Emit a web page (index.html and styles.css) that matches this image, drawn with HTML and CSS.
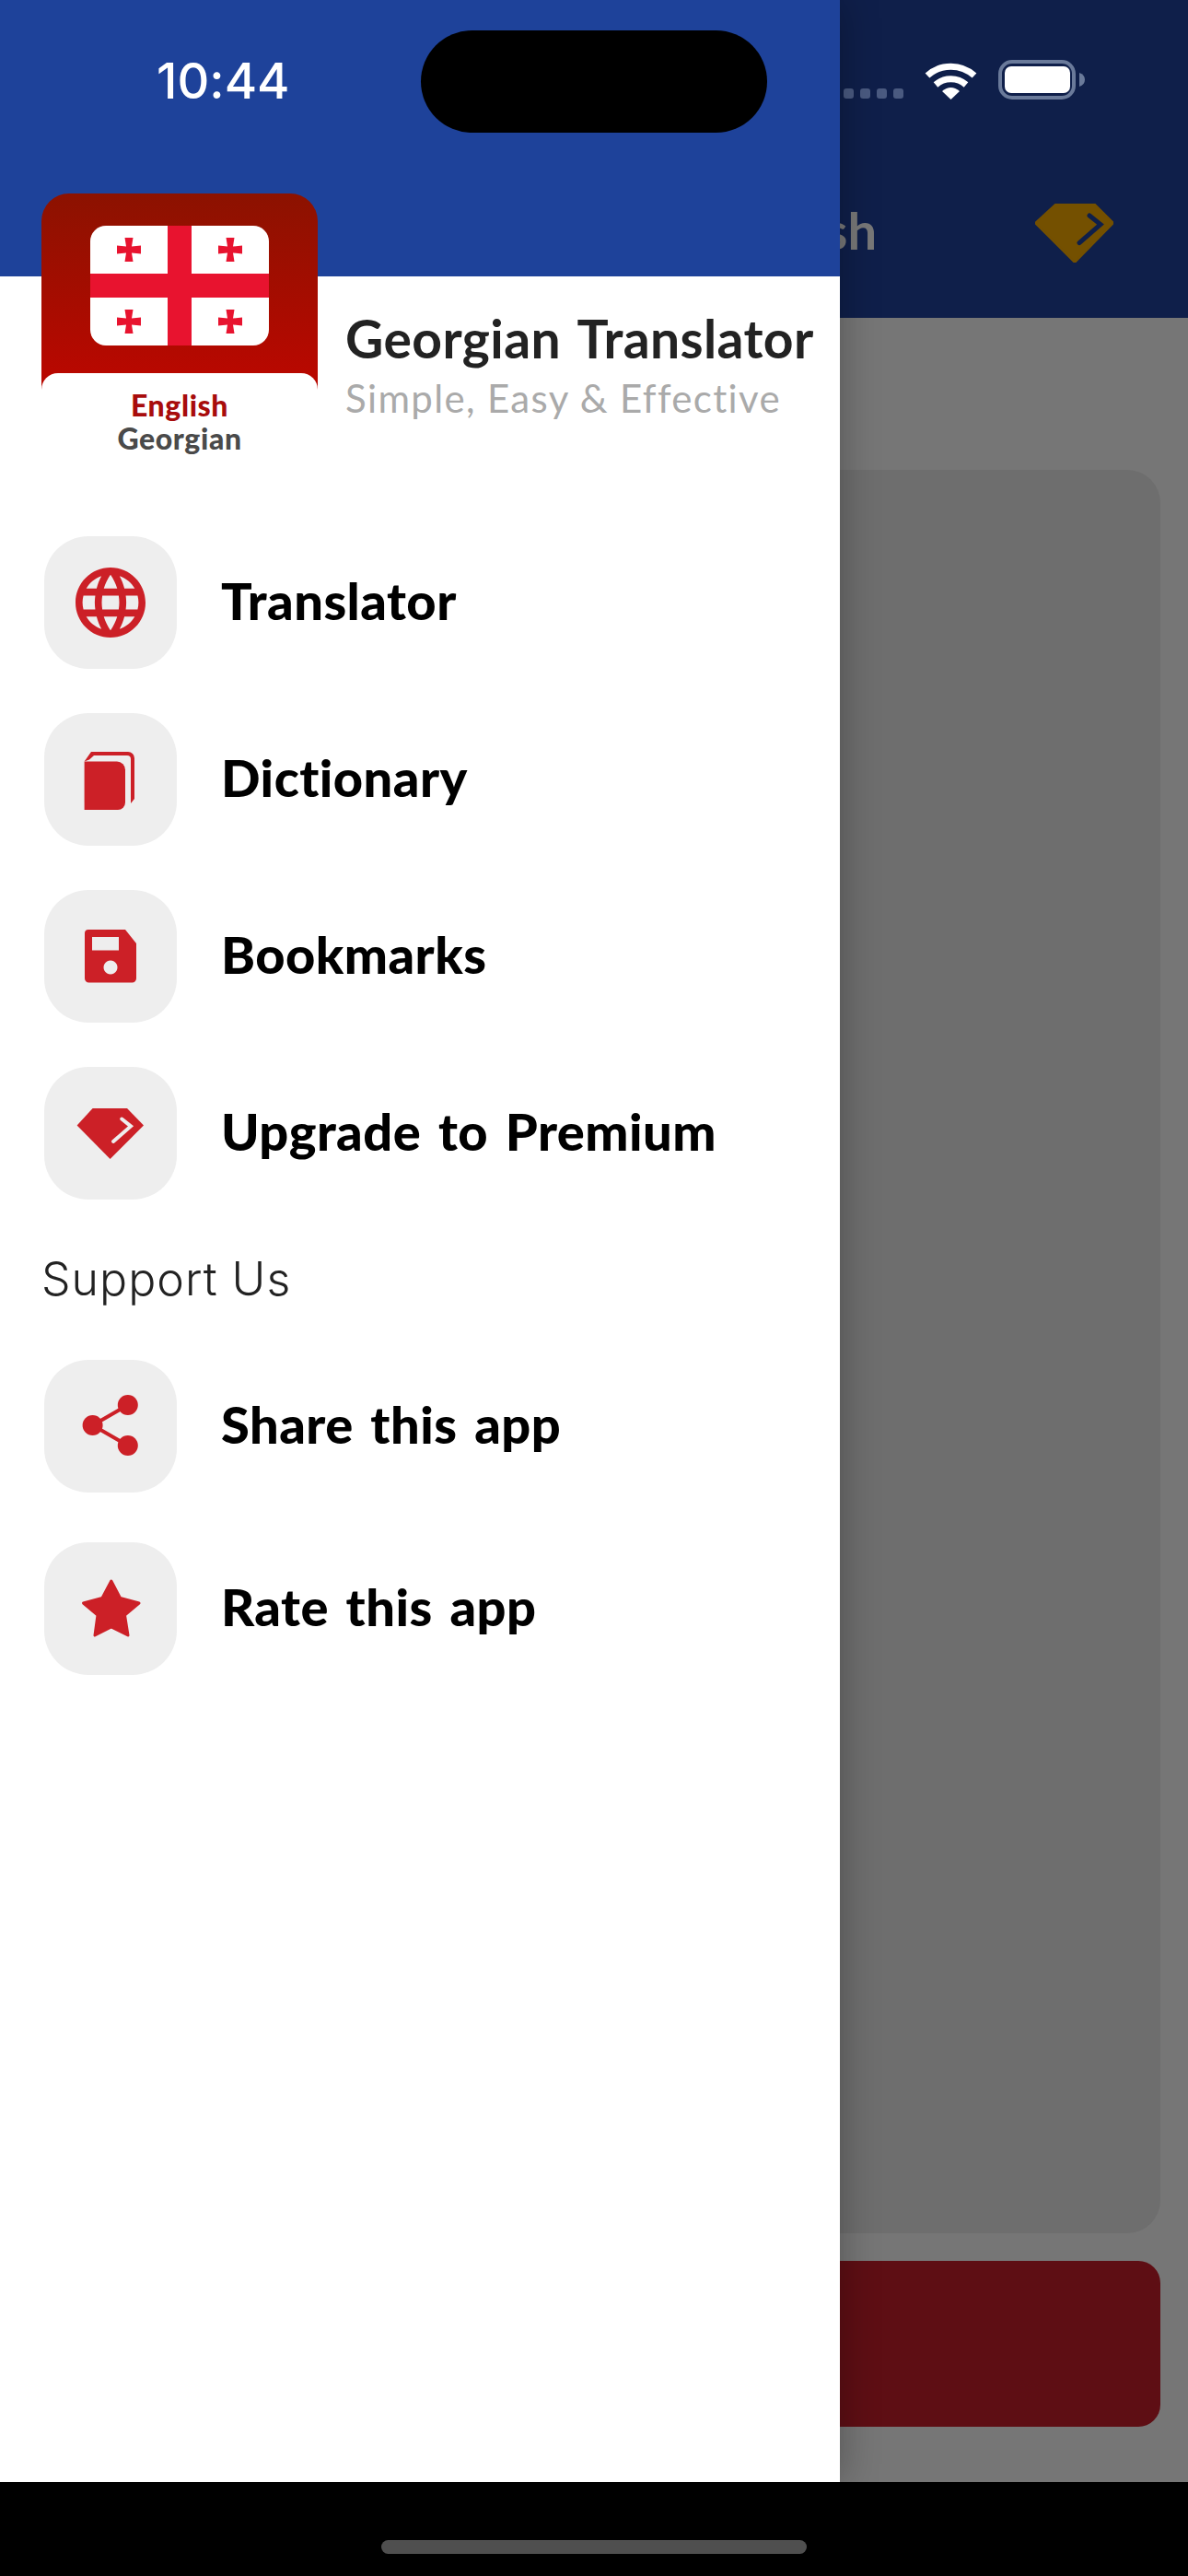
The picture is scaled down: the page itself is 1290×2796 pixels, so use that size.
FILE: index.html
```html
<!DOCTYPE html>
<html lang="en">
<head>
<meta charset="utf-8">
<title>Georgian Translator</title>
<link rel="stylesheet" href="styles.css">
</head>
<body>
<div class="phone">
  <div class="screen">
    <div class="back">
      <header class="back-header">
        <div class="back-status">
          <div class="dots"><i></i><i></i><i></i><i></i></div>
          <svg class="wifi" viewBox="0 0 57 42" width="57" height="42"><path class="wifi-arc" d="M3 16A38 38 0 0 1 54 16"/><path class="wifi-arc" d="M12 26A25 25 0 0 1 45 26"/><path class="wifi-fill" d="M19 33Q28.500 25 38 33L28.500 42Z"/></svg>
          <svg class="battery" viewBox="0 0 94 43" width="94" height="43"><rect class="batt-border" x="2" y="2" width="80" height="39" rx="13"/><rect class="batt-fill" x="7" y="7" width="71" height="29" rx="7"/><path class="batt-nub" d="M88 14Q94 16 94 21.500Q94 27 88 29Z"/></svg>
        </div>
        <div class="back-nav">
          <span class="back-title">English</span>
          <svg class="back-gem" viewBox="0 0 85 64" width="85" height="64"><path class="back-gem-fill" d="M23 0H64L85 21L43 64L0 21Z"/><path class="back-gem-mark" d="M59 13L71 22.600L48 42.600"/></svg>
        </div>
      </header>
      <main class="back-body">
        <div class="back-card"></div>
        <div class="back-button"></div>
      </main>
    </div>

    <aside class="drawer">
      <div class="drawer-top"><span class="time">10:44</span></div>
      <div class="brand">
        <div class="logo">
          <svg class="flag" viewBox="0 0 194 130" width="194" height="130">
            <defs>
              <path id="bolnur" d="M-4.500-13H4.500L3-3.500L13-4.500V4.500L3 3.500L4.500 13H-4.500L-3 3.500L-13 4.500V-4.500L-3-3.500Z"/>
            </defs>
            <rect class="flag-field" width="194" height="130" rx="17"/>
            <rect class="flag-red" x="84" width="26" height="130"/>
            <rect class="flag-red" y="52" width="194" height="26"/>
            <use class="flag-red" href="#bolnur" x="42" y="26"/>
            <use class="flag-red" href="#bolnur" x="152" y="26"/>
            <use class="flag-red" href="#bolnur" x="42" y="104"/>
            <use class="flag-red" href="#bolnur" x="152" y="104"/>
          </svg>
          <div class="logo-labels">
            <span class="logo-en">English</span>
            <span class="logo-ge">Georgian</span>
          </div>
        </div>
        <div class="brand-text">
          <h1 class="brand-title">Georgian Translator</h1>
          <p class="brand-sub">Simple, Easy &amp; Effective</p>
        </div>
      </div>

      <nav class="menu">
        <a class="item">
          <span class="tile"><svg class="tile-icon" viewBox="0 0 144 144"><g transform="translate(26.400 26.400) scale(3.800)"><path class="red" d="M11.990 2C6.470 2 2 6.480 2 12s4.470 10 9.990 10C17.520 22 22 17.520 22 12S17.520 2 11.990 2zm6.930 6h-2.950c-.32-1.250-.78-2.450-1.380-3.560 1.840.63 3.370 1.910 4.330 3.560zM12 4.040c.83 1.200 1.480 2.530 1.910 3.960h-3.820c.43-1.430 1.080-2.760 1.910-3.960zM4.260 14C4.100 13.360 4 12.690 4 12s.1-1.360.26-2h3.380c-.08.66-.14 1.320-.14 2s.06 1.340.14 2H4.260zm.82 2h2.950c.32 1.250.78 2.450 1.380 3.560-1.840-.63-3.370-1.900-4.330-3.560zm2.950-8H5.080c.96-1.660 2.490-2.930 4.330-3.560C8.810 5.550 8.350 6.750 8.030 8zM12 19.960c-.83-1.200-1.480-2.530-1.910-3.960h3.820c-.43 1.430-1.080 2.760-1.910 3.960zM14.340 14H9.660c-.09-.66-.16-1.320-.16-2s.07-1.350.16-2h4.680c.09.650.16 1.320.16 2s-.07 1.340-.16 2zm.25 5.560c.6-1.110 1.060-2.310 1.380-3.560h2.950c-.96 1.650-2.490 2.930-4.330 3.560zM16.360 14c.08-.66.14-1.320.14-2s-.06-1.340-.14-2h3.380c.16.64.26 1.310.26 2s-.1 1.360-.26 2h-3.380z"/></g></svg></span>
          <span class="label">Translator</span>
        </a>
        <a class="item">
          <span class="tile"><svg class="tile-icon" viewBox="0 0 144 144"><path class="red" d="M43.600 52.500H79a9 9 0 0 1 9 9V97a8 8 0 0 1-8 8H43.600Z"/><path class="red" d="M43.600 52.500L51 42H91a7 7 0 0 1 7 7V93L94 98V50a4 4 0 0 0-4-4H54L49 50.500Z"/></svg></span>
          <span class="label">Dictionary</span>
        </a>
        <a class="item">
          <span class="tile"><svg class="tile-icon" viewBox="0 0 144 144"><path class="red" fill-rule="evenodd" d="M48 43H88L100 58V96a4.500 4.500 0 0 1-4.500 4.500H48.500a4.500 4.500 0 0 1-4.500-4.500V47a4 4 0 0 1 4-4ZM52 51V65.500H81V51ZM72 76.500a7.500 7.500 0 1 0 .01 0Z"/></svg></span>
          <span class="label">Bookmarks</span>
        </a>
        <a class="item">
          <span class="tile"><svg class="tile-icon" viewBox="0 0 144 144"><path class="red" d="M52.600 45H90L108 63.400L71.600 100L35.600 63.400Z"/><path class="mark" d="M84.200 56.500L94 64.400L75 81"/></svg></span>
          <span class="label">Upgrade to Premium</span>
        </a>
      </nav>

      <h2 class="section">Support Us</h2>

      <nav class="menu menu-support">
        <a class="item">
          <span class="tile"><svg class="tile-icon" viewBox="0 0 144 144"><path class="share-line" d="M90.800 49L52.600 71L90.800 93"/><circle class="red" cx="90.800" cy="49" r="11"/><circle class="red" cx="52.600" cy="71" r="11"/><circle class="red" cx="90.800" cy="93" r="11"/></svg></span>
          <span class="label">Share this app</span>
        </a>
        <a class="item">
          <span class="tile"><svg class="tile-icon" viewBox="0 0 144 144"><path class="star" d="M72.800 42L82.500 60.500L103 66L87.500 79L91 101L72.800 92L55 101L58 79L42.500 66L63 60.500Z"/></svg></span>
          <span class="label">Rate this app</span>
        </a>
      </nav>
    </aside>

    <div class="island"></div>
  </div>
  <footer class="home"><span class="home-bar"></span></footer>
</div>
</body>
</html>
```
FILE: styles.css
```css
* { box-sizing: border-box; }
html, body { margin: 0; padding: 0; }
body { background: #000; font-family: "Lato", "Liberation Sans", sans-serif; font-variant-ligatures: none; }

.phone { width: 1290px; height: 2796px; display: flex; flex-direction: column; overflow: hidden; }
.screen { position: relative; height: 2694px; overflow: hidden; }

/* dimmed page behind the drawer */
.back { height: 100%; display: flex; flex-direction: column; background: #767676; }
.back-header { height: 345px; flex: none; background: #0f1f4a; padding: 65px 81px 0 0; }
.back-status { display: flex; justify-content: flex-end; align-items: flex-end; gap: 23px; padding-right: 31px; height: 43px; }
.dots { display: flex; gap: 7px; margin-bottom: 1px; }
.dots i { display: block; width: 11px; height: 11px; border-radius: 3px; background: #4a5a80; }
.wifi { display: block; }
.wifi-arc { fill: none; stroke: #fff; stroke-width: 7; }
.wifi-fill { fill: #fff; }
.battery { display: block; }
.batt-border { fill: none; stroke: #6a7a9a; stroke-width: 4; }
.batt-fill { fill: #fff; }
.batt-nub { fill: #6a7a9a; }
.back-nav { display: flex; justify-content: flex-end; align-items: center; gap: 172px; margin-top: 113px; }
.back-title { font-size: 56px; font-weight: 700; color: #787878; line-height: 58px; margin-bottom: 6px; }
.back-gem { display: block; }
.back-gem-fill { fill: #745000; stroke: #745000; stroke-width: 2; stroke-linejoin: round; }
.back-gem-mark { fill: none; stroke: #0f1f4a; stroke-width: 5; stroke-linecap: round; }
.back-body { flex: 1; display: flex; flex-direction: column; gap: 30px; padding: 165px 30px 60px; }
.back-card { flex: 1; background: #6e6e6e; border-radius: 36px; }
.back-button { height: 180px; flex: none; background: #5e0e14; border-radius: 24px; }

/* drawer */
.drawer { position: absolute; left: 0; top: 0; width: 912px; height: 100%; background: #fff; box-shadow: 0 0 40px rgba(0, 0, 0, .3); }
.drawer-top { height: 300px; background: #1e429a; padding: 56px 0 0 170px; }
.time { display: block; font-family: "Inter", sans-serif; font-size: 54px; font-weight: 500; line-height: 63px; color: #fff; }

.brand { display: flex; gap: 30px; margin: -90px 0 0 45px; }
.logo { width: 300px; height: 290px; flex: none; display: flex; flex-direction: column; align-items: center; justify-content: space-between; padding-top: 35px; border-radius: 30px 30px 0 0; background: linear-gradient(#8c1200, #b80800 195px); }
.flag { display: block; flex: none; }
.flag-field { fill: #fff; }
.flag-red { fill: #e8132f; }
.logo-labels { align-self: stretch; height: 95px; background: #fff; border-radius: 18px 18px 0 0; display: flex; flex-direction: column; align-items: center; padding-top: 17px; font-weight: 900; font-size: 32px; line-height: 36px; letter-spacing: .6px; }
.logo-en { color: #a80c0c; }
.logo-ge { color: #4a4a4a; }

.brand-text { padding-top: 125px; }
.brand-title { margin: 0; font-size: 57px; font-weight: 700; line-height: 64px; color: #222; letter-spacing: .4px; word-spacing: 5px; }
.brand-sub { margin: 8px 0 0; font-size: 42px; font-weight: 400; line-height: 50px; color: #aaa; letter-spacing: 1.350px; }

.menu { display: flex; flex-direction: column; gap: 48px; margin: 82px 0 0 48px; }
.menu-support { gap: 54px; margin-top: 58px; }
.item { display: flex; align-items: center; gap: 48px; }
.tile { width: 144px; height: 144px; flex: none; border-radius: 48px; background: #eee; display: block; }
.tile-icon { display: block; width: 144px; height: 144px; }
.label { font-size: 56px; font-weight: 900; color: #000; line-height: 60px; margin-bottom: 5px; letter-spacing: .45px; word-spacing: 5px; }
.red { fill: #cc2027; }
.mark { fill: none; stroke: #eee; stroke-width: 4; stroke-linecap: round; }
.share-line { fill: none; stroke: #cc2027; stroke-width: 4; }
.star { fill: #cc2027; stroke: #cc2027; stroke-width: 3; stroke-linejoin: round; }

.section { margin: 56px 0 0 45px; font-family: "Inter", sans-serif; font-size: 50px; font-weight: 300; line-height: 60px; color: #222; letter-spacing: 1px; }

/* front camera */
.island { position: absolute; left: 457px; top: 33px; width: 376px; height: 111px; border-radius: 56px; background: #000; }

/* home indicator */
.home { height: 102px; flex: none; background: #000; display: flex; justify-content: center; padding-top: 63px; }
.home-bar { display: block; width: 462px; height: 15px; border-radius: 8px; background: #4f4f4f; }
```
